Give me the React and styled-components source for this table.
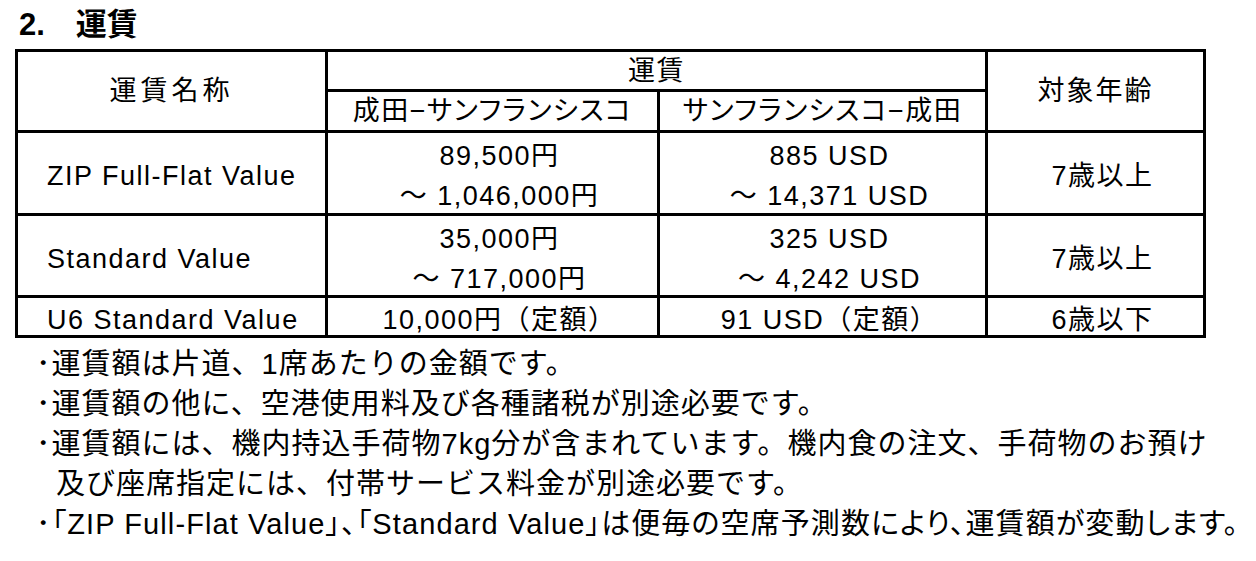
import React from 'react';
import styled, { createGlobalStyle } from 'styled-components';

const Global = createGlobalStyle`
  html, body { margin: 0; padding: 0; background: #fff; }
  body {
    font-family: "Liberation Sans", "Noto Sans CJK JP", sans-serif;
    color: #000;
  }
`;

const Page = styled.div`
  width: 1256px;
  height: 561px;
  overflow: hidden;
  box-sizing: border-box;
  padding-left: 15px;
`;

const Heading = styled.h2`
  margin: 0;
  height: 49px;
  box-sizing: border-box;
  padding: 7px 0 0 4px;
  display: flex;
  align-items: baseline;
  gap: 31px;
  font-size: 31px;
  line-height: 36px;
  font-weight: 700;
`;

const FareGrid = styled.div`
  display: grid;
  width: 1191px;
  box-sizing: border-box;
  grid-template-columns: 307px 329px 325px 215px;
  grid-template-rows: 37px 38px 80px 79px 37px;
  gap: 3px;
  padding: 3px;
  background: #000;
`;

const Cell = styled.div`
  background: #fff;
  display: flex;
  flex-direction: column;
  justify-content: center;
  align-items: ${p => (p.$left ? 'flex-start' : 'center')};
  padding-left: ${p => p.$pad || 0}px;
  padding-top: ${p => (p.$body ? 6 : 0)}px;
  grid-column: ${p => p.$col || 'auto'};
  grid-row: ${p => p.$row || 'auto'};
  font-size: 27px;
  line-height: 40px;
  letter-spacing: ${p => p.$spacing || 1.5}px;
  white-space: nowrap;
  overflow: hidden;
  font-feature-settings: ${p => (p.$palt ? '"palt"' : 'normal')};
`;

const Line = styled.span`
  display: block;
`;

const Notes = styled.ul`
  list-style: none;
  margin: 0;
  padding: 6px 0 0 21px;
  font-size: 29px;
  line-height: 40px;
  letter-spacing: 1px;
  white-space: nowrap;
`;

const Note = styled.li`
  padding-left: ${p => (p.$indent ? '20px' : '0')};
  letter-spacing: ${p => (p.$palt ? '1.1px' : 'inherit')};
  font-feature-settings: ${p => (p.$palt ? '"palt"' : 'normal')};
`;

const rows = [
  { name: 'ZIP Full-Flat Value', out: ['89,500円', '～ 1,046,000円'], back: ['885 USD', '～ 14,371 USD'], age: '7歳以上' },
  { name: 'Standard Value', out: ['35,000円', '～ 717,000円'], back: ['325 USD', '～ 4,242 USD'], age: '7歳以上' },
  { name: 'U6 Standard Value', out: ['10,000円（定額）'], back: ['91 USD（定額）'], age: '6歳以下' },
];

export default function App() {
  return (
    <Page>
      <Global />
      <Heading>
        <span>2.</span>
        <span>運賃</span>
      </Heading>
      <FareGrid>
        <Cell $col="1" $row="1 / span 2" $spacing={4}>運賃名称</Cell>
        <Cell $col="2 / span 2" $row="1">運賃</Cell>
        <Cell $col="4" $row="1 / span 2" $spacing={2}>対象年齢</Cell>
        <Cell $col="2" $row="2" $palt>成田−サンフランシスコ</Cell>
        <Cell $col="3" $row="2" $palt>サンフランシスコ−成田</Cell>
        {rows.map((r, i) => (
          <React.Fragment key={r.name}>
            <Cell $body $col="1" $row={String(i + 3)} $left $pad={29}>{r.name}</Cell>
            <Cell $body $col="2" $row={String(i + 3)} $pad={14}>
              {r.out.map(t => <Line key={t}>{t}</Line>)}
            </Cell>
            <Cell $body $col="3" $row={String(i + 3)} $pad={14}>
              {r.back.map(t => <Line key={t}>{t}</Line>)}
            </Cell>
            <Cell $body $col="4" $row={String(i + 3)} $pad={14}>{r.age}</Cell>
          </React.Fragment>
        ))}
      </FareGrid>
      <Notes>
        <Note>･運賃額は片道、1席あたりの金額です。</Note>
        <Note>･運賃額の他に、空港使用料及び各種諸税が別途必要です。</Note>
        <Note>･運賃額には、機内持込手荷物7kg分が含まれています。機内食の注文、手荷物のお預け</Note>
        <Note $indent>及び座席指定には、付帯サービス料金が別途必要です。</Note>
        <Note $palt>･「ZIP Full-Flat Value」、「Standard Value」は便毎の空席予測数により、運賃額が変動します。</Note>
      </Notes>
    </Page>
  );
}
